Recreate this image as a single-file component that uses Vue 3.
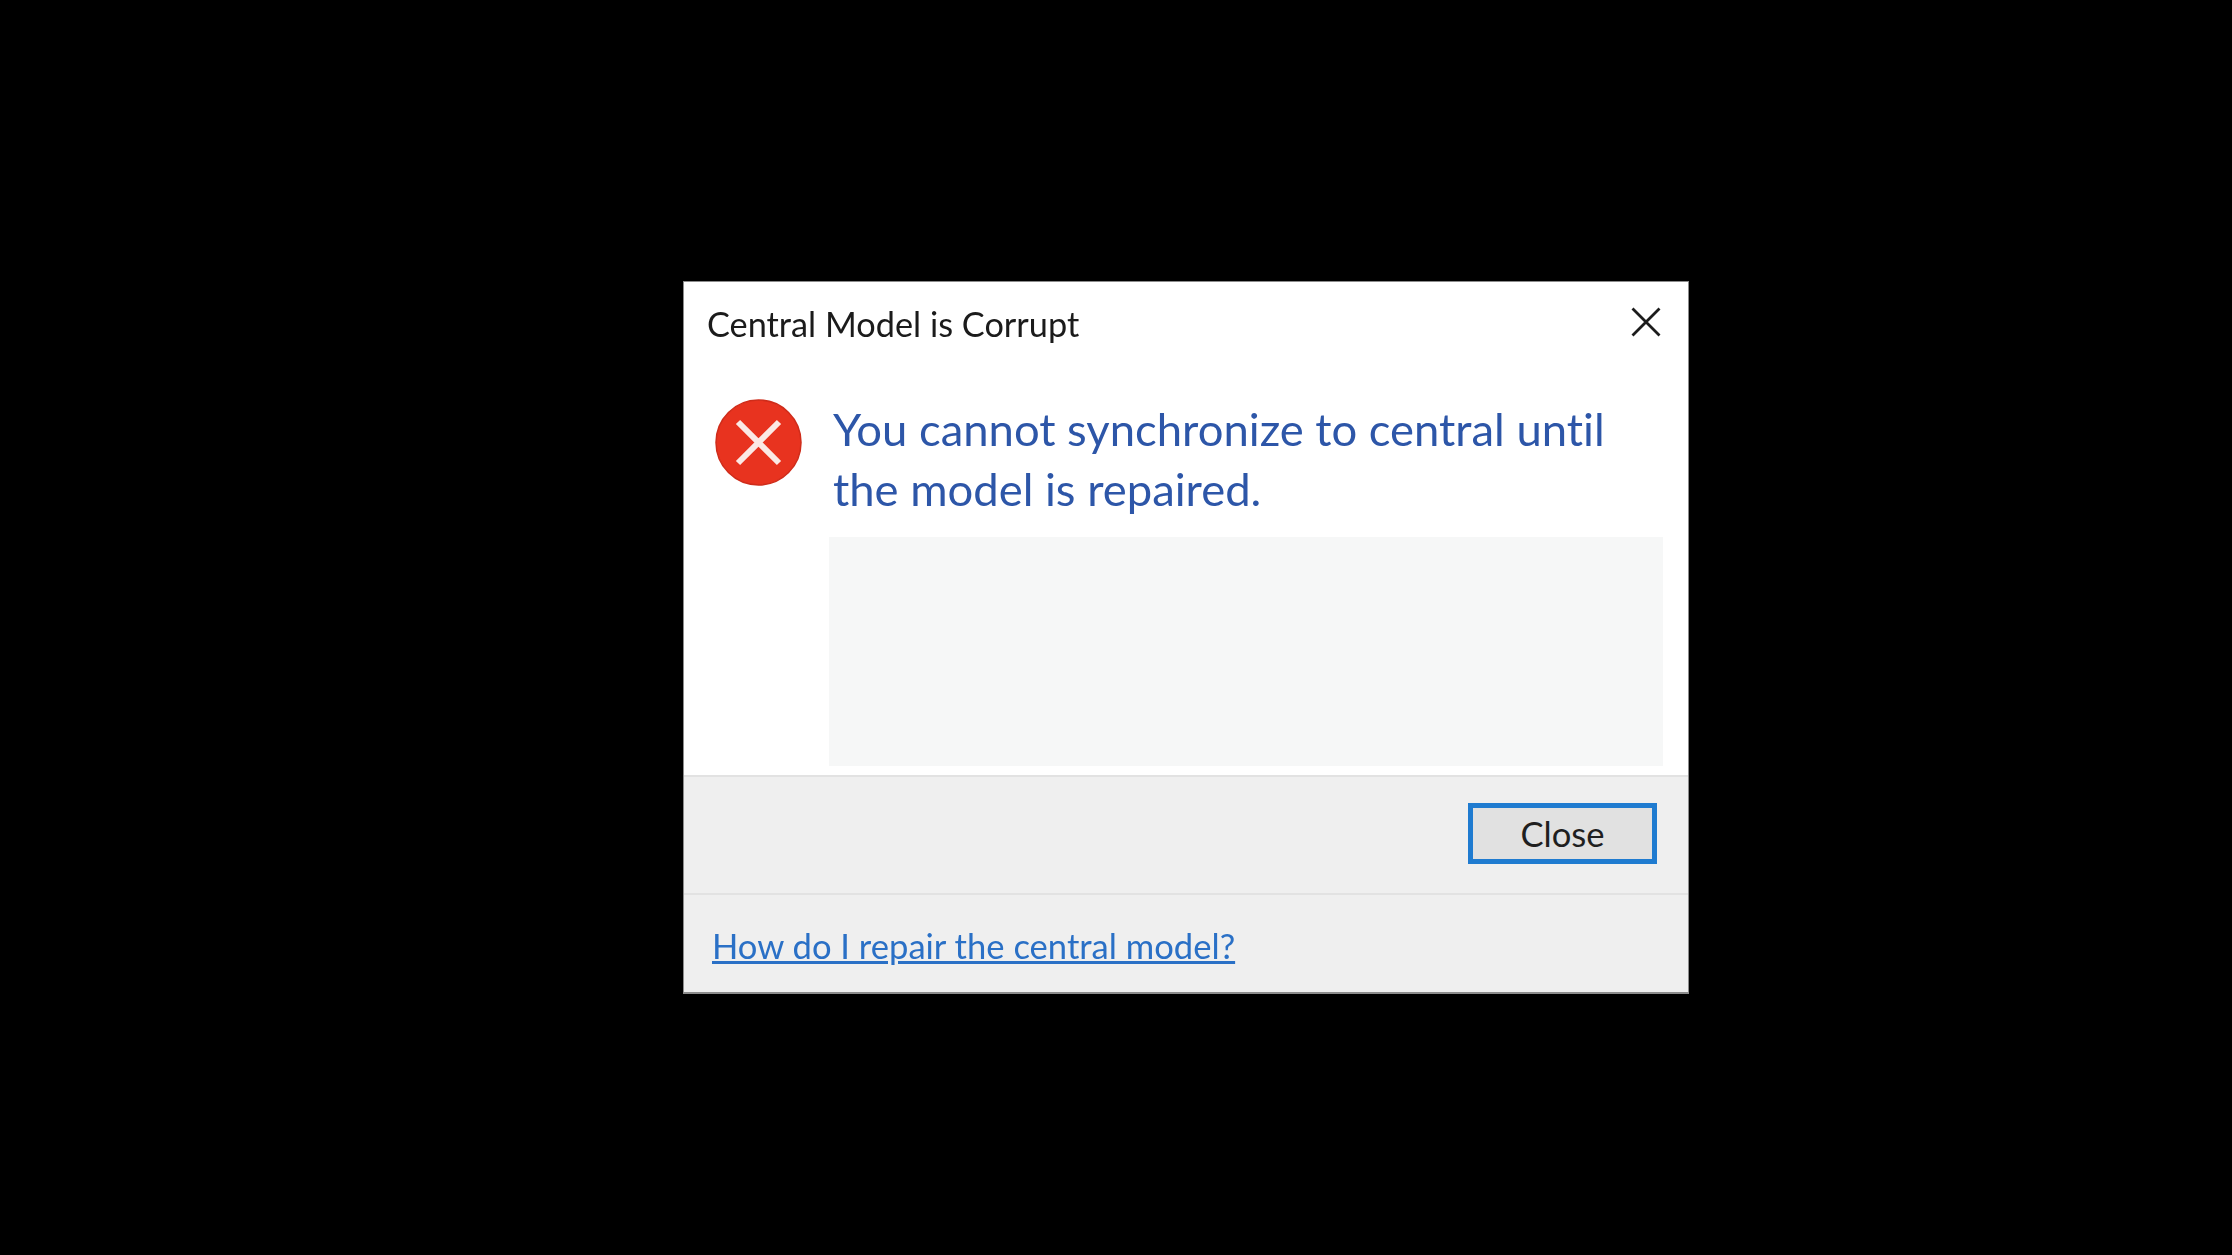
<script setup>
const title = 'Central Model is Corrupt'
const message = 'You cannot synchronize to central until the model is repaired.'
const helpLink = 'How do I repair the central model?'
</script>

<template>
  <div class="screen">
    <div class="dialog">
      <div class="titlebar">
        <span class="title">{{ title }}</span>
        <svg class="close-x" width="30" height="30" viewBox="0 0 30 30">
          <path d="M1.5 1.5 L28.5 28.5 M28.5 1.5 L1.5 28.5" stroke="#1c1c1c" stroke-width="2.8" fill="none" />
        </svg>
      </div>
      <div class="body">
        <svg class="error-icon" width="87" height="87" viewBox="0 0 87 87">
          <circle cx="43.5" cy="43.5" r="42.5" fill="#e8331f" stroke="#cf2c1a" stroke-width="1.5" />
          <path d="M23 23 L64 64 M64 23 L23 64" stroke="#fbe9e5" stroke-width="6" fill="none" />
        </svg>
        <div class="content">
          <div class="message">{{ message }}</div>
          <div class="details"></div>
        </div>
      </div>
      <div class="actions">
        <button class="close-btn">Close</button>
      </div>
      <div class="footer">
        <a class="help" href="#">{{ helpLink }}</a>
      </div>
    </div>
  </div>
</template>

<style>
html, body {
  background: #000;
}
</style>

<style scoped>
.screen {
  width: 2232px;
  height: 1255px;
  background: #000;
  box-sizing: border-box;
  padding: 281px 0 0 683px;
  overflow: hidden;
}
.dialog {
  width: 1006px;
  height: 713px;
  box-sizing: border-box;
  background: #fff;
  border: 1px solid #8c8c8c;
  border-bottom-width: 2px;
  display: flex;
  flex-direction: column;
  font-family: "Lato", "Open Sans", sans-serif;
  font-variant-ligatures: none;
}
.titlebar {
  height: 74px;
  display: flex;
  align-items: center;
  justify-content: space-between;
  padding: 8px 27px 0 23px;
  box-sizing: border-box;
}
.title {
  font-size: 34.3px;
  color: #1b1b1b;
  filter: blur(0.7px);
}
.close-x {
  margin-top: -3px;
}
.body {
  height: 419px;
  display: flex;
  align-items: flex-start;
  padding-left: 31px;
  box-sizing: border-box;
}
.error-icon {
  margin-top: 43px;
  flex: none;
}
.content {
  margin-left: 27px;
  width: 834px;
}
.message {
  padding: 43px 30px 0 4px;
  font-size: 45.4px;
  line-height: 60px;
  color: #2d56a8;
  height: 181px;
  box-sizing: border-box;
  filter: blur(0.7px);
}
.details {
  height: 229px;
  background: #f6f7f7;
}
.actions {
  height: 120px;
  box-sizing: border-box;
  background: #efefef;
  border-top: 2px solid #e2e2e2;
  border-bottom: 2px solid #e2e2e2;
  display: flex;
  align-items: flex-start;
  justify-content: flex-end;
  padding: 26px 31px 0 0;
}
.close-btn {
  width: 189px;
  height: 61px;
  box-sizing: border-box;
  border: 5px solid #1f7bd0;
  background: #e1e1e1;
  font-family: inherit;
  font-size: 34.6px;
  color: #1f1f1f;
  padding: 0;
}
.footer {
  flex: 1;
  background: #efefef;
  padding: 30px 0 0 28px;
  box-sizing: border-box;
}
.help {
  font-size: 34.6px;
  color: #2a70c6;
  text-decoration: underline;
  text-decoration-thickness: 3px;
  filter: blur(0.7px);
}
</style>
